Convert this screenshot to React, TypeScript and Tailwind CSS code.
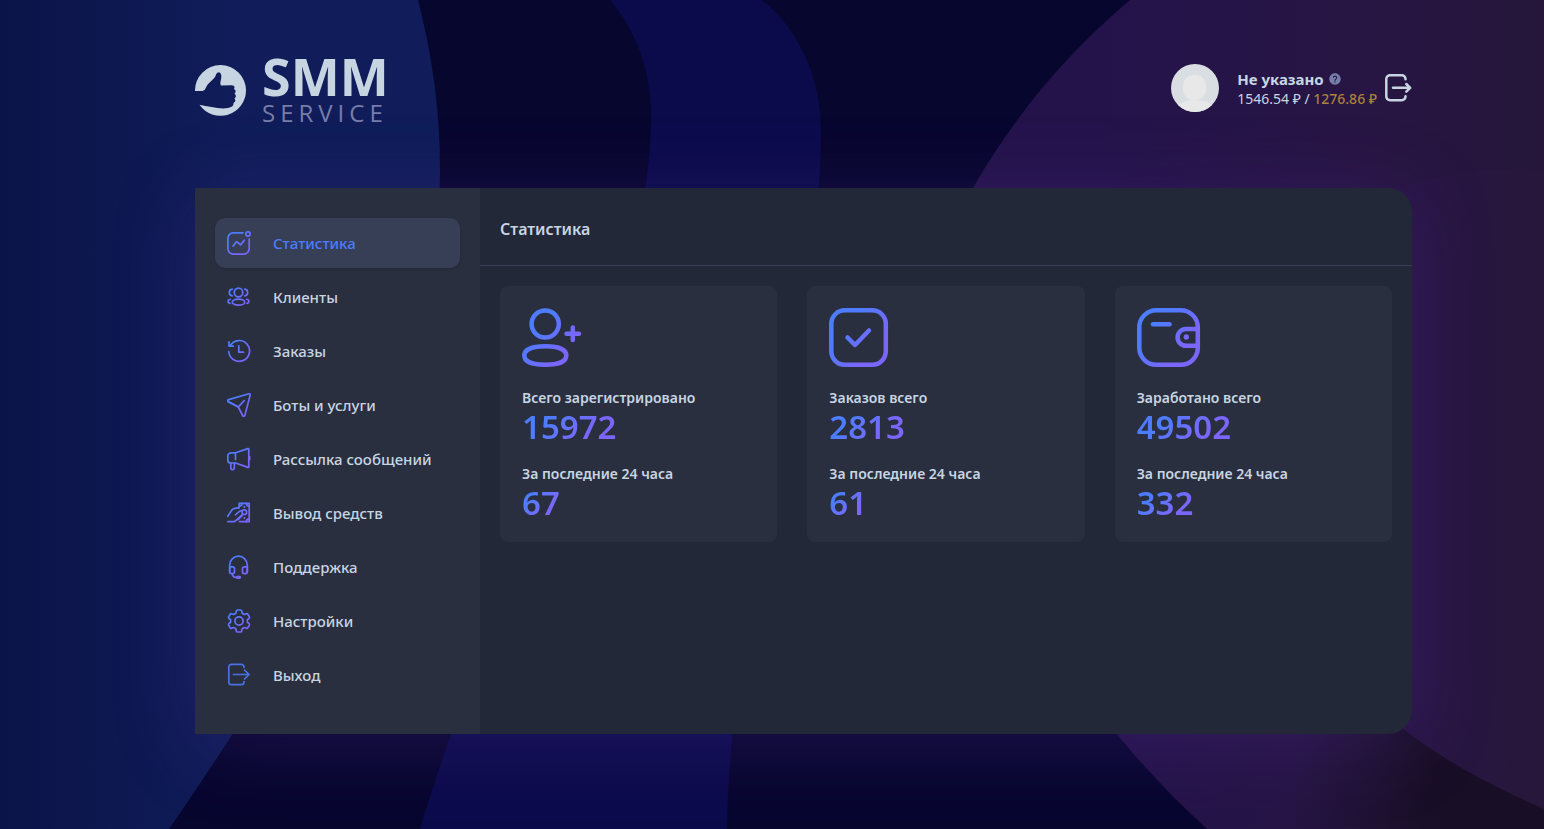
import React, { useState } from 'react';
import { IoMdHelpCircle } from 'react-icons/io';

type IconProps = { className?: string };

// Shared gradient for every icon in the menu and cards
const Gradients: React.FC = () => (
  <svg width="0" height="0" className="absolute" aria-hidden="true">
    <defs>
      <linearGradient id="menuGrad" gradientUnits="userSpaceOnUse" x1="2" y1="2" x2="20" y2="22">
        <stop offset="0.2" stopColor="#4d7cfe" />
        <stop offset="0.8" stopColor="#7a66fb" />
      </linearGradient>
      <linearGradient id="cardGrad" gradientUnits="userSpaceOnUse" x1="4" y1="8" x2="56" y2="52">
        <stop offset="0.25" stopColor="#4d7cfe" />
        <stop offset="0.75" stopColor="#7a66fb" />
      </linearGradient>
    </defs>
  </svg>
);

const MenuIcon: React.FC<{ children: React.ReactNode }> = ({ children }) => (
  <svg width="24" height="24" viewBox="0 0 24 24" fill="none" stroke="url(#menuGrad)" strokeWidth="1.7" strokeLinecap="round" strokeLinejoin="round" className="shrink-0" aria-hidden="true">
    {children}
  </svg>
);

const menu = [
  {
    id: 'stats',
    label: 'Статистика',
    icon: (
      <>
        <path d="M16 1.8H6.5A5.5 5.5 0 0 0 .9 7.4v10.2a5.5 5.5 0 0 0 5.6 5.5h10.2a5.5 5.5 0 0 0 5.5-5.5V8" />
        <circle cx="21" cy="3" r="2.2" />
        <path d="M6 15.2l3.6-4.6 4.1 3.2 3.6-4.6" />
      </>
    ),
  },
  {
    id: 'clients',
    label: 'Клиенты',
    icon: (
      <>
        <circle cx="11.5" cy="7.5" r="4.3" />
        <ellipse cx="11.5" cy="17.2" rx="6.3" ry="3" />
        <path d="M5.2 4.100c-3.800.5-3.800 6.200 0 6.800M17.800 4.100c3.800.5 3.800 6.200 0 6.800M3.200 14.300c-3 .8-2.800 3.400-.2 4.100M19.800 14.300c3 .8 2.800 3.400.2 4.100" />
      </>
    ),
  },
  {
    id: 'orders',
    label: 'Заказы',
    icon: (
      <>
        <path d="M3.300 6.500A10.400 10.400 0 1 1 1.800 12.500" />
        <path d="M2 2.800v4.300h4.300M11.800 6.800v6.400h4.700" />
      </>
    ),
  },
  {
    id: 'bots',
    label: 'Боты и услуги',
    icon: (
      <>
        <path d="M1 8.400C.4 7.700.8 6.900 1.600 6.600L22 .8c.9-.2 1.400.3 1.200 1.200L17.800 22.600c-.3.900-1.500 1-2 .2L11.300 14z" />
        <path d="M1 8.400l10.300 5.600 5.900-6.300" />
      </>
    ),
  },
  {
    id: 'mailing',
    label: 'Рассылка сообщений',
    icon: (
      <>
        <path d="M8.500 5.800L21 1.600c.5-.1.800.2.800.7v17.400c0 .5-.3.800-.8.700L8.500 16H4a3.200 3.200 0 0 1-3.200-3.200V9A3.200 3.200 0 0 1 4 5.800zM8.500 5.800v6.600M22.600 9.500v3" />
        <path d="M3.800 16v4.800c0 2.600 3.500 2.600 3.500 0V16" />
      </>
    ),
  },
  {
    id: 'withdraw',
    label: 'Вывод средств',
    icon: (
      <>
        <path d="M12.200 6.200V2.300h10v18.400h-9.500" />
        <path d="M12.200 5.200a3 3 0 0 0 2.900-2.900M19.300 2.300a3 3 0 0 0 2.900 2.900M22.200 17.800a3 3 0 0 0-2.900 2.900" />
        <path d="M.8 15.300C3 12 4.300 8.600 6.600 7.700c1.700-.7 3.800-.8 5.600-.9M8.500 13.800c2.200-1.800 3.600-4.300 6.600-4.300M.8 20.700h6.500c3.200-2.300 4.800-4.700 7.800-6.500" />
        <circle cx="17.300" cy="11.200" r="2.300" />
        <path d="M17.300 5.800v.1M17.300 17v.1M15 14.200l-4 4.300" strokeWidth="2" />
      </>
    ),
  },
  {
    id: 'support',
    label: 'Поддержка',
    icon: (
      <>
        <path d="M2.700 17V10a8.800 8.800 0 0 1 17.600 0v7" />
        <path d="M2.700 11.800h3c1 0 1.800.8 1.800 1.800v3.200c0 1-.8 1.800-1.800 1.800h-1.200c-1 0-1.800-.8-1.800-1.800zM20.300 11.800h-3c-1 0-1.800.8-1.800 1.800v3.200c0 1 .8 1.800 1.800 1.800h1.200c1 0 1.800-.8 1.800-1.800zM5.200 18.800c.3 2.400 1.700 3.700 4.800 3.700" />
        <ellipse cx="11.500" cy="22.300" rx="1.900" ry="1" fill="#7a66fb" />
      </>
    ),
  },
  {
    id: 'settings',
    label: 'Настройки',
    icon: (
      <>
        <path d="M10.300 1h3.400c.6 0 .9.4 1 1l.4 2.200 2.300 1.300 2-.8c.6-.2 1.100-.1 1.400.5l1.600 2.700c.3.600.2 1.100-.3 1.500l-1.700 1.300v2.600l1.700 1.300c.5.400.6.900.3 1.500l-1.600 2.700c-.3.600-.8.700-1.400.5l-2-.8-2.300 1.300-.4 2.200c-.1.600-.4 1-1 1h-3.400c-.6 0-.9-.4-1-1l-.4-2.200-2.300-1.300-2 .8c-.6.2-1.100.1-1.400-.5l-1.600-2.700c-.3-.6-.2-1.100.3-1.500l1.700-1.300v-2.600L1.900 9.400c-.5-.4-.6-.9-.3-1.500l1.600-2.700c.3-.6.8-.7 1.400-.5l2 .8 2.300-1.300.4-2.200c.1-.6.4-1 1-1z" />
        <circle cx="12" cy="12" r="4.100" />
      </>
    ),
  },
  {
    id: 'exit',
    label: 'Выход',
    icon: <path d="M17 4.300V4a2.700 2.700 0 0 0-2.700-2.700H4.500A2.700 2.700 0 0 0 1.800 4v15a2.700 2.700 0 0 0 2.700 2.700h9.800A2.700 2.700 0 0 0 17 19v-.3M6.500 11.500h15.300M17.500 7l4.500 4.500-4.500 4.500" stroke="#4b72e4" />,
  },
];

const UserPlusIcon: React.FC = () => (
  <svg width="64" height="60" viewBox="0 0 64 60" fill="none" stroke="url(#cardGrad)" strokeWidth="4.500" strokeLinecap="round" aria-hidden="true">
    <circle cx="23.200" cy="16" r="13.600" />
    <path d="M2.300 47.500c0-6 8-9.300 21-9.300s21 3.300 21 9.300-8 9.300-21 9.300-21-3.300-21-9.300z" />
    <path d="M44.500 25.800H57M50.800 19.500V32" />
  </svg>
);

const CheckIcon: React.FC = () => (
  <svg width="64" height="60" viewBox="0 0 64 60" fill="none" stroke="url(#cardGrad)" strokeWidth="4.500" strokeLinecap="round" strokeLinejoin="round" aria-hidden="true">
    <rect x="2.300" y="2.300" width="54.500" height="54.500" rx="13.500" />
    <path d="M18.500 29.500l7.500 7.500 14-14.500" />
  </svg>
);

const WalletIcon: React.FC = () => (
  <svg width="64" height="60" viewBox="0 0 64 60" fill="none" stroke="url(#cardGrad)" strokeWidth="4.500" strokeLinecap="round" aria-hidden="true">
    <rect x="2.300" y="2.300" width="58.500" height="54.500" rx="17" />
    <path d="M16 16.300h16.500" />
    <path d="M60.500 21H49a8.300 8.300 0 0 0 0 16.800h11.500" />
    <circle cx="49.300" cy="29" r="2.700" fill="#7a66fb" stroke="none" />
  </svg>
);

const cards = [
  { icon: <UserPlusIcon />, title: 'Всего зарегистрировано', total: '15972', day: '67' },
  { icon: <CheckIcon />, title: 'Заказов всего', total: '2813', day: '61' },
  { icon: <WalletIcon />, title: 'Заработано всего', total: '49502', day: '332' },
];

const Backdrop: React.FC = () => (
  <svg className="absolute inset-0 -z-10 h-full w-full" viewBox="0 0 1544 829" preserveAspectRatio="xMidYMid slice" aria-hidden="true">
    <defs>
      <linearGradient id="leftWave" gradientUnits="userSpaceOnUse" x1="0" y1="0" x2="240" y2="0">
        <stop offset="0" stopColor="#0b1448" />
        <stop offset="1" stopColor="#101d5a" />
      </linearGradient>
      <linearGradient id="rightWave" gradientUnits="userSpaceOnUse" x1="1100" y1="0" x2="1544" y2="0">
        <stop offset="0" stopColor="#24134b" />
        <stop offset="0.6" stopColor="#271543" />
        <stop offset="1" stopColor="#25163a" />
      </linearGradient>
      <linearGradient id="rightShade" gradientUnits="userSpaceOnUse" x1="1290" y1="0" x2="1440" y2="0">
        <stop offset="0" stopColor="#180e26" stopOpacity="0" />
        <stop offset="1" stopColor="#180e26" />
      </linearGradient>
      <linearGradient id="rightFront" gradientUnits="userSpaceOnUse" x1="1400" y1="0" x2="1544" y2="0">
        <stop offset="0" stopColor="#281546" />
        <stop offset="1" stopColor="#27173a" />
      </linearGradient>
    </defs>
    <rect width="1544" height="829" fill="#07062f" />
    <path d="M610 0C640 35 652 80 651 120C648 330 500 560 420 829H727C730 600 821 330 821 130C821 80 800 30 762 0z" fill="#0b0b4c" />
    <path d="M0 0H418C432 55 440 110 440 170C440 400 300 640 169 829H0z" fill="url(#leftWave)" />
    <path d="M1130 0C1065 55 1015 115 973 188C920 400 1000 640 1207 829H1544V0z" fill="url(#rightWave)" />
    <path d="M1207 700H1544V829H1207z" fill="url(#rightShade)" />
    <path d="M1544 170C1480 166 1430 178 1390 192V718C1440 760 1490 785 1544 809z" fill="url(#rightFront)" />
  </svg>
);

const Logo: React.FC = () => (
  <a href="#" className="flex items-center gap-4">
    <svg width="51" height="51" viewBox="0 0 51 51" aria-hidden="true">
      <path
        d="M0 26A25.500 25.500 0 0 1 25.500 0A25.500 25.500 0 0 1 51 25.500A25.500 25.500 0 0 1 4.500 39.800C14 41.500 25 44.500 33 43C38 42 38.500 40 38.500 38C41 36.500 40.500 35 39.500 33.500C41.500 32 41.200 30 39.500 28.500C41.200 27 41 25 39 24C40.300 21.500 39 20 36 20.300L26 20.600C24 17.500 27.500 13 26 9.500C25 6 21.500 7 20.500 11C18.500 15 13.500 17.500 11.500 21.500C10 24.500 9.500 26 6.500 26z"
        fill="#c7d5e2"
      />
    </svg>
    <span className="flex flex-col font-['Open_Sans','Noto_Sans',sans-serif]">
      <span className="text-[52px] leading-[46px] font-bold text-[#c7d5e2]">SMM</span>
      <span className="text-2xl leading-7 font-medium tracking-[5px] text-[#777da9]">SERVICE</span>
    </span>
  </a>
);

const Avatar: React.FC = () => (
  <svg width="48" height="48" viewBox="0 0 48 48" className="shrink-0" aria-hidden="true">
    <clipPath id="avatarClip"><circle cx="24" cy="24" r="24" /></clipPath>
    <g clipPath="url(#avatarClip)">
      <rect width="48" height="48" fill="#d9dee3" />
      <rect x="12" y="11" width="23" height="25" rx="10" fill="#e8e8e8" />
      <path d="M6 48V42c4-4 9-5.500 14-5.800h8c5 .3 10 1.800 14 5.800v6z" fill="#e8e8e8" />
    </g>
  </svg>
);

const LogoutIcon: React.FC<IconProps> = ({ className }) => (
  <svg width="27" height="28" viewBox="0 0 27 28" fill="none" stroke="#c7d5e2" strokeWidth="2.500" strokeLinecap="round" strokeLinejoin="round" className={className} aria-hidden="true">
    <path d="M20.500 5.300V5a3.700 3.700 0 0 0-3.700-3.700H5A3.700 3.700 0 0 0 1.300 5v17.500A3.700 3.700 0 0 0 5 26.200h11.800a3.700 3.700 0 0 0 3.700-3.700V22.300M8 13.800h17M21.300 10l3.900 3.800-3.900 3.800" />
  </svg>
);

const GradientNumber: React.FC<{ value: string }> = ({ value }) => (
  <span className="block w-fit bg-linear-135 from-[#4d7cfe] from-30% to-[#7a66fb] to-70% bg-clip-text text-[33px] leading-[38px] font-semibold text-transparent">{value}</span>
);

export default function App() {
  const [active, setActive] = useState('stats');

  return (
    <div className="relative isolate min-h-screen overflow-hidden px-6 font-['Noto_Sans','Open_Sans',sans-serif] text-[#c7d5e2] xl:pr-[132px] xl:pl-[195px]">
      <Gradients />
      <Backdrop />
      <div className="pb-[95px]">
        <header className="flex h-[188px] items-start justify-between pt-[53px]">
          <Logo />
          <div className="flex items-center pt-[11px]">
            <Avatar />
            <div className="ml-[18px] pt-0.5">
              <div className="flex items-center gap-1 text-[15px] leading-5 font-bold">
                Не указано <IoMdHelpCircle size={14} className="text-[#777da9]" />
              </div>
              <div className="text-sm leading-5">
                1546.54 ₽ / <span className="font-medium text-[#a9823a]">1276.86 ₽</span>
              </div>
            </div>
            <button type="button" aria-label="Выйти" className="ml-2 cursor-pointer"><LogoutIcon /></button>
          </div>
        </header>

        <div className="flex min-h-[546px] overflow-hidden rounded-r-3xl bg-[#222837] shadow-[0_10px_80px_rgba(90,50,160,0.25)]">
          <aside className="w-[285px] shrink-0 bg-[#292f3e] px-5 pt-[30px]">
            <nav className="flex flex-col gap-1">
              {menu.map((item) => (
                <a
                  key={item.id}
                  href={`#${item.id}`}
                  onClick={() => setActive(item.id)}
                  className={`${active === item.id ? 'bg-[#363f56] text-[#4d7cfe] shadow-sm' : ''} flex h-[50px] items-center gap-[22px] rounded-[10px] px-3 text-[15px] font-medium`}
                >
                  <MenuIcon>{item.icon}</MenuIcon>
                  {item.label}
                </a>
              ))}
            </nav>
          </aside>

          <main className="min-w-0 flex-1">
            <div className="flex h-[78px] items-center border-b border-[#363f56] px-5 pt-1">
              <h1 className="text-base font-semibold">Статистика</h1>
            </div>
            <div className="grid grid-cols-3 gap-[30px] px-5 pt-5">
              {cards.map((card) => (
                <section key={card.title} className="rounded-lg bg-[#292f3e] px-[22px] pt-[22px] pb-5">
                  {card.icon}
                  <h2 className="mt-5 text-sm leading-5 font-semibold">{card.title}</h2>
                  <GradientNumber value={card.total} />
                  <h3 className="mt-[18px] text-sm leading-5 font-semibold">За последние 24 часа</h3>
                  <GradientNumber value={card.day} />
                </section>
              ))}
            </div>
          </main>
        </div>
      </div>
    </div>
  );
}
